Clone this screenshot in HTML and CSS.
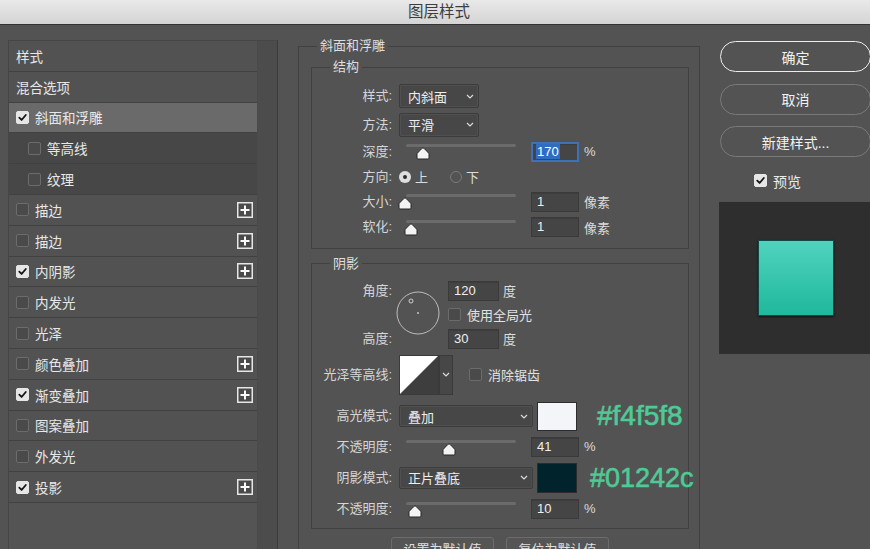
FILE: index.html
```html
<!DOCTYPE html>
<html lang="zh">
<head>
<meta charset="utf-8">
<title>图层样式</title>
<link rel="stylesheet" href="styles.css">
</head>
<body>
<div class="titlebar">图层样式</div>
<div class="main">
  <div class="left">
    <ul class="list">
      <li class="row"><span>样式</span></li>
      <li class="row"><span>混合选项</span></li>
      <li class="row sel"><span class="cb on"><svg viewBox="0 0 12 12"><path d="M2.5 6.2 5 8.7 9.6 3.3"/></svg></span><span>斜面和浮雕</span></li>
      <li class="row sub"><span class="cb"></span><span>等高线</span></li>
      <li class="row sub"><span class="cb"></span><span>纹理</span></li>
      <li class="row"><span class="cb"></span><span>描边</span><span class="plus"><svg viewBox="0 0 16 16"><rect x="0.75" y="0.75" width="14.5" height="14.5"/><path d="M8 3.5v9M3.5 8h9"/></svg></span></li>
      <li class="row"><span class="cb"></span><span>描边</span><span class="plus"><svg viewBox="0 0 16 16"><rect x="0.75" y="0.75" width="14.5" height="14.5"/><path d="M8 3.5v9M3.5 8h9"/></svg></span></li>
      <li class="row"><span class="cb on"><svg viewBox="0 0 12 12"><path d="M2.5 6.2 5 8.7 9.6 3.3"/></svg></span><span>内阴影</span><span class="plus"><svg viewBox="0 0 16 16"><rect x="0.75" y="0.75" width="14.5" height="14.5"/><path d="M8 3.5v9M3.5 8h9"/></svg></span></li>
      <li class="row"><span class="cb"></span><span>内发光</span></li>
      <li class="row"><span class="cb"></span><span>光泽</span></li>
      <li class="row"><span class="cb"></span><span>颜色叠加</span><span class="plus"><svg viewBox="0 0 16 16"><rect x="0.75" y="0.75" width="14.5" height="14.5"/><path d="M8 3.5v9M3.5 8h9"/></svg></span></li>
      <li class="row"><span class="cb on"><svg viewBox="0 0 12 12"><path d="M2.5 6.2 5 8.7 9.6 3.3"/></svg></span><span>渐变叠加</span><span class="plus"><svg viewBox="0 0 16 16"><rect x="0.75" y="0.75" width="14.5" height="14.5"/><path d="M8 3.5v9M3.5 8h9"/></svg></span></li>
      <li class="row"><span class="cb"></span><span>图案叠加</span></li>
      <li class="row"><span class="cb"></span><span>外发光</span></li>
      <li class="row"><span class="cb on"><svg viewBox="0 0 12 12"><path d="M2.5 6.2 5 8.7 9.6 3.3"/></svg></span><span>投影</span><span class="plus"><svg viewBox="0 0 16 16"><rect x="0.75" y="0.75" width="14.5" height="14.5"/><path d="M8 3.5v9M3.5 8h9"/></svg></span></li>
    </ul>
    <div class="scrolltrack"></div>
  </div>

  <fieldset class="group outer">
    <legend>斜面和浮雕</legend>

    <fieldset class="group inner struct">
      <legend>结构</legend>
      <div class="frow h24">
        <span class="lab">样式:</span>
        <div class="dd w80"><span>内斜面</span><svg class="chev" viewBox="0 0 8 5"><path d="M1 1l3 3 3-3"/></svg></div>
      </div>
      <div class="frow h24">
        <span class="lab">方法:</span>
        <div class="dd w80"><span>平滑</span><svg class="chev" viewBox="0 0 8 5"><path d="M1 1l3 3 3-3"/></svg></div>
      </div>
      <div class="frow h21">
        <span class="lab">深度:</span>
        <div class="slider"><div class="track"></div><svg class="thumb" style="left:10px" viewBox="0 0 14 13"><path d="M7 1C7.5 1 8 1.3 8.5 1.8L12.5 6C12.8 6.3 13 6.7 13 7.2V11C13 11.6 12.6 12 12 12H2C1.4 12 1 11.6 1 11V7.2C1 6.7 1.2 6.3 1.5 6L5.5 1.8C6 1.3 6.5 1 7 1Z"/></svg></div>
        <div class="num focus"><span class="selected">170</span></div>
        <span class="unit">%</span>
      </div>
      <div class="frow h20">
        <span class="lab">方向:</span>
        <span class="radio on"></span><span class="rtxt">上</span>
        <span class="radio off"></span><span class="rtxt">下</span>
      </div>
      <div class="frow h21">
        <span class="lab">大小:</span>
        <div class="slider"><div class="track"></div><svg class="thumb" style="left:-8px" viewBox="0 0 14 13"><path d="M7 1C7.5 1 8 1.3 8.5 1.8L12.5 6C12.8 6.3 13 6.7 13 7.2V11C13 11.6 12.6 12 12 12H2C1.4 12 1 11.6 1 11V7.2C1 6.7 1.2 6.3 1.5 6L5.5 1.8C6 1.3 6.5 1 7 1Z"/></svg></div>
        <div class="num">1</div>
        <span class="unit">像素</span>
      </div>
      <div class="frow h21">
        <span class="lab">软化:</span>
        <div class="slider"><div class="track"></div><svg class="thumb" style="left:-2px" viewBox="0 0 14 13"><path d="M7 1C7.5 1 8 1.3 8.5 1.8L12.5 6C12.8 6.3 13 6.7 13 7.2V11C13 11.6 12.6 12 12 12H2C1.4 12 1 11.6 1 11V7.2C1 6.7 1.2 6.3 1.5 6L5.5 1.8C6 1.3 6.5 1 7 1Z"/></svg></div>
        <div class="num">1</div>
        <span class="unit">像素</span>
      </div>
    </fieldset>

    <fieldset class="group inner shadow">
      <legend>阴影</legend>
      <div class="angle">
        <span class="lab a1">角度:</span>
        <span class="lab a3">高度:</span>
        <svg class="dial" viewBox="0 0 44 44"><circle class="ring" cx="22" cy="22" r="21"/><circle class="knob" cx="15" cy="10" r="2"/><circle class="dot" cx="22" cy="22" r="0.9"/></svg>
        <div class="acell r1"><div class="num w51">120</div><span class="unit2">度</span></div>
        <div class="acell r2"><span class="cb"></span><span class="ctxt">使用全局光</span></div>
        <div class="acell r3"><div class="num w51">30</div><span class="unit2">度</span></div>
      </div>
      <div class="frow contour">
        <span class="lab">光泽等高线:</span>
        <svg class="curve" viewBox="0 0 40 40"><rect width="40" height="40" fill="#3e3e3e"/><path d="M0 0H40L0 40Z" fill="#fff"/></svg>
        <div class="curvedd"><svg class="chev" viewBox="0 0 8 5"><path d="M1 1l3 3 3-3"/></svg></div>
        <span class="cb aa"></span><span class="ctxt">消除锯齿</span>
      </div>
      <div class="frow h29 mt7">
        <span class="lab">高光模式:</span>
        <div class="dd w134"><span>叠加</span><svg class="chev" viewBox="0 0 8 5"><path d="M1 1l3 3 3-3"/></svg></div>
        <span class="swatch light"></span>
        <span class="hex hex1">#f4f5f8</span>
      </div>
      <div class="frow h20 mt6">
        <span class="lab">不透明度:</span>
        <div class="slider"><div class="track"></div><svg class="thumb" style="left:36px" viewBox="0 0 14 13"><path d="M7 1C7.5 1 8 1.3 8.5 1.8L12.5 6C12.8 6.3 13 6.7 13 7.2V11C13 11.6 12.6 12 12 12H2C1.4 12 1 11.6 1 11V7.2C1 6.7 1.2 6.3 1.5 6L5.5 1.8C6 1.3 6.5 1 7 1Z"/></svg></div>
        <div class="num">41</div>
        <span class="unit">%</span>
      </div>
      <div class="frow h30 mt6">
        <span class="lab">阴影模式:</span>
        <div class="dd w134"><span>正片叠底</span><svg class="chev" viewBox="0 0 8 5"><path d="M1 1l3 3 3-3"/></svg></div>
        <span class="swatch dark"></span>
        <span class="hex hex2">#01242c</span>
      </div>
      <div class="frow h20 mt6">
        <span class="lab">不透明度:</span>
        <div class="slider"><div class="track"></div><svg class="thumb" style="left:2px" viewBox="0 0 14 13"><path d="M7 1C7.5 1 8 1.3 8.5 1.8L12.5 6C12.8 6.3 13 6.7 13 7.2V11C13 11.6 12.6 12 12 12H2C1.4 12 1 11.6 1 11V7.2C1 6.7 1.2 6.3 1.5 6L5.5 1.8C6 1.3 6.5 1 7 1Z"/></svg></div>
        <div class="num">10</div>
        <span class="unit">%</span>
      </div>
    </fieldset>

    <div class="defaults">
      <button class="dbtn">设置为默认值</button>
      <button class="dbtn">复位为默认值</button>
    </div>
  </fieldset>

  <div class="right">
    <button class="btn primary">确定</button>
    <button class="btn">取消</button>
    <button class="btn">新建样式...</button>
    <div class="preview-check"><span class="cb on"><svg viewBox="0 0 12 12"><path d="M2.5 6.2 5 8.7 9.6 3.3"/></svg></span><span>预览</span></div>
    <div class="preview"><div class="square"></div></div>
  </div>
</div>
</body>
</html>
```

FILE: styles.css
```css
* { box-sizing: border-box; margin: 0; padding: 0; }
html, body { width: 870px; height: 549px; overflow: hidden; }
body {
  background: #535353;
  font-family: "Liberation Sans", "Noto Sans CJK SC", sans-serif;
  font-size: 13px;
  color: #d9d9d9;
}

.titlebar {
  height: 25px;
  background: linear-gradient(#e9e9e9, #d4d4d4);
  border-bottom: 1px solid #343434;
  text-align: center;
  font-size: 15.5px;
  line-height: 24px;
  color: #3d3d3d;
  padding-left: 8px;
}

.main {
  display: flex;
  align-items: flex-start;
  padding-left: 8px;
}
.main > * { flex: none; }

/* left list */
.left {
  margin-top: 15px;
  width: 270px;
  height: 520px;
  display: flex;
  border: 1px solid #464646;
  border-right-color: #3b3b3b;
  background: #545454;
}
.list {
  width: 248px;
  list-style: none;
  padding-top: 0;
}
.row {
  height: 30.8px;
  display: flex;
  align-items: center;
  gap: 6px;
  padding: 0 4px 0 7px;
  border-bottom: 1px solid #414141;
  background: #525252;
  color: #e8e8e8;
  font-size: 13.5px;
}
.row.sub { padding-left: 19px; background: #474747; }
.row.sel { background: #6a6a6a; }
.plus { margin-left: auto; width: 16px; height: 16px; display: block; }
.plus svg { width: 16px; height: 16px; display: block; }
.plus rect { fill: #4a4a4a; stroke: #e6e6e6; stroke-width: 1.5; }
.plus path { stroke: #fafafa; stroke-width: 2; fill: none; }
.scrolltrack {
  width: 20px;
  background: #4c4c4c;
  border-left: 1px solid #4a4a4a;
}

/* checkbox */
.cb {
  width: 13px;
  height: 13px;
  flex: none;
  border-radius: 2px;
  background: #4a4a4a;
  border: 1px solid #6c6c6c;
  display: block;
}
.cb.on { background: #e6e6e6; border-color: #e6e6e6; }
.cb svg { width: 11px; height: 11px; display: block; }
.cb path { fill: none; stroke: #151515; stroke-width: 2; stroke-linecap: round; stroke-linejoin: round; }

/* group boxes */
.group {
  border: 1px solid #414141;
  min-width: 0;
}
.group legend {
  line-height: 16px;
  padding: 0 3px;
  color: #dedede;
  font-size: 13px;
}
.outer {
  margin-top: 13px;
  margin-left: 20px;
  width: 402px;
  height: 530px;
  padding: 0 10px 0 12px;
}
.outer > legend { margin-left: 6px; }
.inner { width: 378px; padding: 0; }
.inner > legend { margin-left: 18px; }
.struct {
  margin-top: 5px;
  padding: 9px 0 10px 0;
  display: flex;
  flex-direction: column;
  gap: 4.6px;
}
.shadow {
  margin-top: 7px;
  padding: 9px 0 9px 0;
}

.frow { display: flex; align-items: center; }
.h20 { height: 20px; }
.h21 { height: 21px; }
.h24 { height: 24px; }
.h29 { height: 29px; }
.h30 { height: 30px; }
.mt6 { margin-top: 6px; }
.mt7 { margin-top: 7px; }

.lab {
  width: 80px;
  flex: none;
  text-align: right;
  margin-right: 7px;
  color: #d6d6d6;
  line-height: 18px;
}

/* dropdown */
.dd {
  height: 24px;
  background: #474747;
  border: 1px solid #3c3c3c;
  border-radius: 2px;
  box-shadow: inset 0 0 0 1px #505050;
  display: flex;
  align-items: center;
  justify-content: space-between;
  padding: 0 4px 0 8px;
  color: #eeeeee;
  flex: none;
}
.w80 { width: 80px; }
.w134 { width: 134px; height: 22px; }
.chev { width: 8px; height: 5px; display: block; }
.chev path { fill: none; stroke: #dcdcdc; stroke-width: 1.2; }

/* slider */
.slider {
  position: relative;
  width: 110px;
  height: 100%;
  margin-left: 7px;
  flex: none;
}
.track {
  margin-top: 3px;
  height: 3px;
  border-radius: 2px;
  background: #6b6b6b;
}
.thumb {
  position: absolute;
  top: 6px;
  width: 14px;
  height: 13px;
}
.thumb path { fill: #f3f3f3; stroke: #262626; stroke-width: 1; }

/* number inputs */
.num {
  width: 48px;
  height: 20px;
  margin-left: 15px;
  background: #454545;
  border: 1px solid #3a3a3a;
  box-shadow: inset 0 1px 0 #3d3d3d;
  padding-left: 5px;
  line-height: 18px;
  color: #efefef;
  font-size: 13px;
  flex: none;
}
.num.focus {
  border: 2px solid #3e72b8;
  padding-left: 3px;
  line-height: 16px;
}
.selected {
  background: #2e6dc2;
  color: #ffffff;
  padding: 0 1px;
}
.unit { margin-left: 5px; color: #dcdcdc; }
.unit2 { margin-left: 4px; color: #dcdcdc; }

/* radio */
.radio {
  width: 12px;
  height: 12px;
  border-radius: 50%;
  flex: none;
}
.radio.on {
  background: #dedede;
  box-shadow: inset 0 0 0 4px #dedede, inset 0 0 0 6px #2b2b2b;
}
.radio.off { border: 1px solid #7a7a7a; margin-left: 22px; }
.rtxt { margin-left: 4px; color: #dcdcdc; }

/* angle */
.angle {
  display: grid;
  grid-template-columns: 80px 42px auto;
  grid-template-rows: 20px 28px 20px;
}
.a1 { grid-column: 1; grid-row: 1; align-self: center; }
.a3 { grid-column: 1; grid-row: 3; align-self: center; }
.dial {
  grid-column: 2;
  grid-row: 1 / 4;
  align-self: center;
  width: 44px;
  height: 44px;
  margin-left: 4px;
  margin-top: -3px;
}
.ring { fill: none; stroke: #bdbdbd; stroke-width: 1; }
.knob { fill: none; stroke: #cfcfcf; stroke-width: 1; }
.dot { fill: #d0d0d0; }
.acell { grid-column: 3; display: flex; align-items: center; margin-left: 14px; }
.acell .num { margin-left: 0; }
.r1 { grid-row: 1; }
.r2 { grid-row: 2; }
.r3 { grid-row: 3; }
.w51 { width: 51px; }
.ctxt { margin-left: 6px; color: #e2e2e2; }

/* contour */
.contour { height: 40px; margin-top: 6px; }
.curve { width: 40px; height: 40px; flex: none; display: block; border: 1px solid #3a3a3a; }
.curvedd {
  width: 14px;
  height: 40px;
  background: #474747;
  border: 1px solid #3a3a3a;
  display: flex;
  align-items: center;
  justify-content: center;
  flex: none;
}
.cb.aa { margin-left: 16px; }

/* swatches */
.swatch {
  width: 40px;
  height: 29px;
  margin-left: 4px;
  border: 1px solid #2c2c2c;
  flex: none;
}
.swatch.light { background: #f4f5f8; }
.swatch.dark { background: #01242c; height: 30px; }
.hex {
  font-family: "Liberation Sans", sans-serif;
  font-size: 28px;
  color: #4fca96;
  -webkit-text-stroke: 0.6px #4fca96;
  white-space: nowrap;
  line-height: 30px;
}
.hex1 { margin-left: 20px; }
.hex2 { margin-left: 13px; font-size: 27px; }

/* defaults buttons */
.defaults {
  margin-top: 8px;
  display: flex;
  justify-content: center;
  gap: 12px;
}
.dbtn {
  width: 103px;
  height: 24px;
  background: #555555;
  border: 1px solid #6c6c6c;
  border-radius: 3px;
  color: #e0e0e0;
  font-family: "Liberation Sans", "Noto Sans CJK SC", sans-serif;
  font-size: 13px;
}

/* right column */
.right {
  margin-top: 16px;
  margin-left: 20px;
  width: 151px;
  display: flex;
  flex-direction: column;
  gap: 11.5px;
}
.btn {
  height: 31px;
  border-radius: 16px;
  background: #535353;
  border: 1px solid #7a7a7a;
  color: #f2f2f2;
  font-family: "Liberation Sans", "Noto Sans CJK SC", sans-serif;
  font-size: 14px;
}
.btn.primary { border: 1.5px solid #ededed; }
.preview-check {
  margin-top: 5px;
  padding-left: 34px;
  display: flex;
  align-items: center;
  gap: 6px;
  height: 14px;
  color: #ececec;
  font-size: 14px;
}
.preview {
  margin-top: 3px;
  margin-left: -1px;
  width: 154px;
  height: 152px;
  background: #2e2e2e;
  display: flex;
  align-items: center;
  justify-content: center;
}
.square {
  width: 76px;
  height: 76px;
  background: linear-gradient(#50d3bf, #1fb89d);
  border: 1px solid #114a44;
  box-shadow: 0 1px 2px rgba(0, 0, 0, 0.6);
}
```
